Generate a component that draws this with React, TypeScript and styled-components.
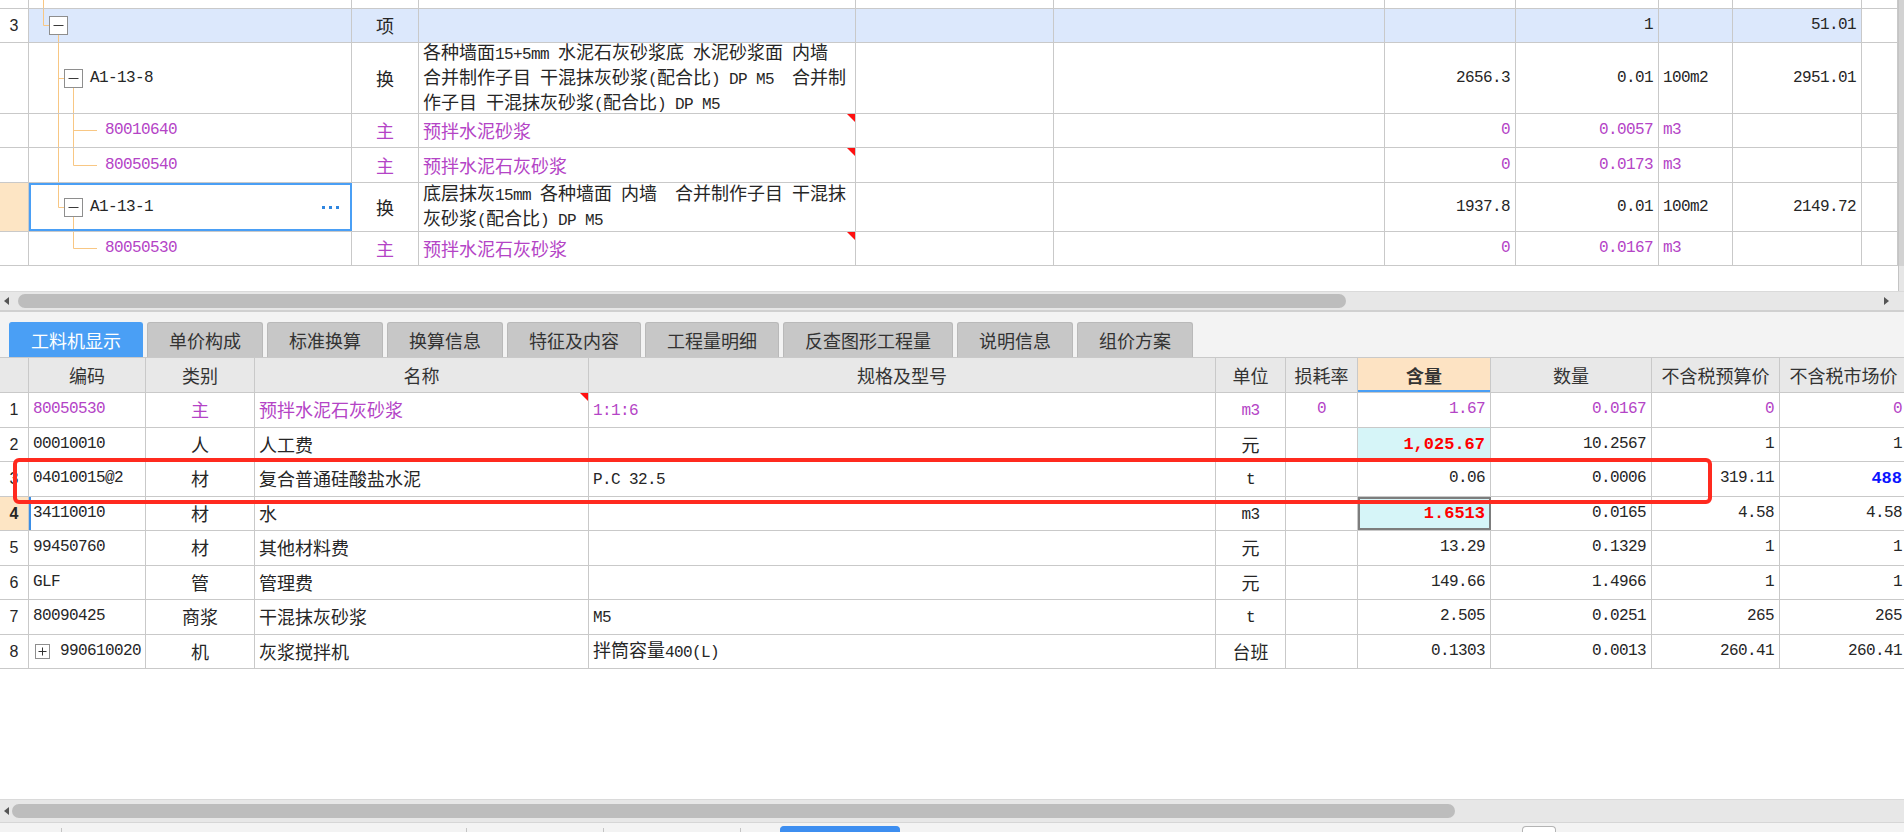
import React from 'react';
import styled, { createGlobalStyle } from 'styled-components';

const TEXT = '#262626';
const PURPLE = '#b444c6';
const GRID = '#c9c9c9';
const BAND = '#dce8fc';
const CURRENT = '#fde5c4';
const CYAN = '#d6f5f8';
const ORANGE = '#f8c784';
const BLUE = '#4a9ff5';

const GlobalStyle = createGlobalStyle`
  html, body {
    margin: 0;
    padding: 0;
    background: #fff;
  }
  body {
    font-family: "Noto Sans CJK SC", "Liberation Sans", sans-serif;
    font-size: 18px;
    color: ${TEXT};
    overflow: hidden;
  }
  * {
    box-sizing: border-box;
  }
`;

type Align = 'left' | 'center' | 'right';
type TreeKind = 'pre' | 'group' | 'item1' | 'leafMid' | 'leafEnd' | 'item2' | 'leafLast';

interface TopRowData {
  h: number;
  tree: TreeKind;
  num?: string;
  code?: string;
  type?: string;
  name?: string;
  n1?: string;
  n2?: string;
  unit?: string;
  n3?: string;
  main?: boolean;
  flag?: boolean;
  band?: boolean;
  current?: boolean;
}

interface BottomRowData {
  no: string;
  code: string;
  type: string;
  name: string;
  spec?: string;
  unit: string;
  loss?: string;
  qty: string;
  amount: string;
  budget: string;
  market: string;
  main?: boolean;
  flag?: boolean;
  hot?: boolean;
  current?: boolean;
  blue?: boolean;
  expand?: boolean;
}

const topRows: TopRowData[] = [
  { h: 9, tree: 'pre' },
  { h: 34, tree: 'group', num: '3', type: '项', n2: '1', n3: '51.01', band: true },
  {
    h: 71,
    tree: 'item1',
    code: 'A1-13-8',
    type: '换',
    name: '各种墙面15+5mm 水泥石灰砂浆底 水泥砂浆面 内墙 合并制作子目 干混抹灰砂浆(配合比) DP M5  合并制作子目 干混抹灰砂浆(配合比) DP M5',
    n1: '2656.3',
    n2: '0.01',
    unit: '100m2',
    n3: '2951.01',
  },
  { h: 34, tree: 'leafMid', code: '80010640', type: '主', name: '预拌水泥砂浆', n1: '0', n2: '0.0057', unit: 'm3', main: true, flag: true },
  { h: 35, tree: 'leafEnd', code: '80050540', type: '主', name: '预拌水泥石灰砂浆', n1: '0', n2: '0.0173', unit: 'm3', main: true, flag: true },
  {
    h: 49,
    tree: 'item2',
    code: 'A1-13-1',
    type: '换',
    name: '底层抹灰15mm 各种墙面 内墙  合并制作子目 干混抹灰砂浆(配合比) DP M5',
    n1: '1937.8',
    n2: '0.01',
    unit: '100m2',
    n3: '2149.72',
    current: true,
  },
  { h: 34, tree: 'leafLast', code: '80050530', type: '主', name: '预拌水泥石灰砂浆', n1: '0', n2: '0.0167', unit: 'm3', main: true, flag: true },
];

const tabs = ['工料机显示', '单价构成', '标准换算', '换算信息', '特征及内容', '工程量明细', '反查图形工程量', '说明信息', '组价方案'];

const BOTTOM_COLS = [29, 117, 109, 334, 627, 70, 72, 133, 161, 128, 128];
const HEADERS = ['', '编码', '类别', '名称', '规格及型号', '单位', '损耗率', '含量', '数量', '不含税预算价', '不含税市场价'];

const bottomRows: BottomRowData[] = [
  { no: '1', code: '80050530', type: '主', name: '预拌水泥石灰砂浆', spec: '1:1:6', unit: 'm3', loss: '0', qty: '1.67', amount: '0.0167', budget: '0', market: '0', main: true, flag: true },
  { no: '2', code: '00010010', type: '人', name: '人工费', unit: '元', qty: '1,025.67', amount: '10.2567', budget: '1', market: '1', hot: true },
  { no: '3', code: '04010015@2', type: '材', name: '复合普通硅酸盐水泥', spec: 'P.C 32.5', unit: 't', qty: '0.06', amount: '0.0006', budget: '319.11', market: '488', blue: true },
  { no: '4', code: '34110010', type: '材', name: '水', unit: 'm3', qty: '1.6513', amount: '0.0165', budget: '4.58', market: '4.58', hot: true, current: true },
  { no: '5', code: '99450760', type: '材', name: '其他材料费', unit: '元', qty: '13.29', amount: '0.1329', budget: '1', market: '1' },
  { no: '6', code: 'GLF', type: '管', name: '管理费', unit: '元', qty: '149.66', amount: '1.4966', budget: '1', market: '1' },
  { no: '7', code: '80090425', type: '商浆', name: '干混抹灰砂浆', spec: 'M5', unit: 't', qty: '2.505', amount: '0.0251', budget: '265', market: '265' },
  { no: '8', code: '990610020', type: '机', name: '灰浆搅拌机', spec: '拌筒容量400(L)', unit: '台班', qty: '0.1303', amount: '0.0013', budget: '260.41', market: '260.41', expand: true },
];

const Page = styled.div`
  position: relative;
  width: 1904px;
  height: 832px;
  display: flex;
  flex-direction: column;
  overflow: hidden;
  background: #fff;
`;

const TopPane = styled.div`
  flex: none;
  height: 291px;
  display: flex;
`;

const TopTable = styled.div`
  width: 1898px;
  display: flex;
  flex-direction: column;
`;

const VScroll = styled.div`
  width: 6px;
  background: #e6e6e6;
  border-left: 1px solid #c4c4c4;
  display: flex;
  flex-direction: column;
`;

const VThumb = styled.div`
  height: 266px;
  background: #d2d2d2;
`;

const Row = styled.div<{ $h: number }>`
  flex: none;
  display: flex;
  height: ${p => p.$h}px;
  border-bottom: 1px solid ${GRID};
`;

const Cell = styled.div<{ $w: number; $align?: Align; $color?: string; $bg?: string; $bold?: boolean }>`
  position: relative;
  flex: none;
  width: ${p => p.$w}px;
  height: 100%;
  display: flex;
  align-items: center;
  justify-content: ${p => (p.$align === 'right' ? 'flex-end' : p.$align === 'center' ? 'center' : 'flex-start')};
  padding: 0 ${p => (p.$align === 'right' ? 5 : 4)}px;
  border-right: 1px solid ${GRID};
  background: ${p => p.$bg || 'transparent'};
  color: ${p => p.$color || TEXT};
  font-weight: ${p => (p.$bold ? 700 : 400)};
  line-height: 21px;
  white-space: nowrap;
  overflow: hidden;
`;

const DescCell = styled(Cell)`
  white-space: pre-wrap;
  overflow: visible;
`;

const TreeCell = styled(Cell)<{ $selected?: boolean }>`
  padding: 0;
  outline: ${p => (p.$selected ? `2px solid ${BLUE}` : 'none')};
  outline-offset: -2px;
`;

const CodeCell = styled(Cell)<{ $marked?: boolean }>`
  box-shadow: ${p => (p.$marked ? `inset 2px 0 0 #3a8ee6` : 'none')};
`;

const QtyCell = styled(Cell)<{ $selected?: boolean }>`
  outline: ${p => (p.$selected ? '2px solid #7d7d7d' : 'none')};
  outline-offset: -2px;
`;

const Mono = styled.span<{ $color?: string }>`
  font-family: "Liberation Mono", "DejaVu Sans Mono", monospace;
  font-size: 16px;
  letter-spacing: -0.6px;
  color: ${p => p.$color || 'inherit'};
`;

const HotNum = styled.span<{ $color: string }>`
  font-family: "Liberation Mono", "DejaVu Sans Mono", monospace;
  font-size: 17px;
  font-weight: 700;
  color: ${p => p.$color};
`;

const RowNo = styled.span<{ $bold?: boolean }>`
  font-family: "Liberation Sans", Arial, sans-serif;
  font-size: 16px;
  font-weight: ${p => (p.$bold ? 700 : 400)};
`;

const Flag = styled.span`
  position: absolute;
  top: 0;
  right: 0;
  width: 0;
  height: 0;
  border-top: 8px solid #ff1010;
  border-left: 8px solid transparent;
`;

const Dots = styled.span`
  margin-left: auto;
  margin-right: 12px;
  display: flex;
  gap: 4px;
`;

const Dot = styled.span`
  width: 3px;
  height: 3px;
  background: #2f86e0;
`;

const GuideSvg = styled.svg`
  flex: none;
  display: block;
`;

const HScroll = styled.div<{ $h: number; $pr: number }>`
  flex: none;
  height: ${p => p.$h}px;
  display: flex;
  align-items: center;
  padding: 0 ${p => p.$pr}px 0 4px;
  background: #e7e7e7;
  border-top: 1px solid #dadada;
`;

const Arrow = styled.span<{ $dir: 'left' | 'right' }>`
  flex: none;
  width: 0;
  height: 0;
  border-top: 4px solid transparent;
  border-bottom: 4px solid transparent;
  ${p => (p.$dir === 'left' ? 'border-right: 5px solid #555;' : 'border-left: 5px solid #555;')}
`;

const Thumb = styled.div<{ $w: number; $ml: number }>`
  flex: none;
  width: ${p => p.$w}px;
  height: 14px;
  margin-left: ${p => p.$ml}px;
  border-radius: 7px;
  background: #bdbdbd;
`;

const Spacer = styled.div`
  flex: 1;
`;

const TabBar = styled.div`
  flex: none;
  height: 48px;
  display: flex;
  align-items: flex-end;
  gap: 4px;
  padding-left: 9px;
  background: #f3f3f3;
  border-top: 2px solid #d0d0d0;
  border-bottom: 1px solid ${GRID};
`;

const Tab = styled.div<{ $active?: boolean }>`
  height: 35px;
  padding: 0 21px;
  display: flex;
  align-items: center;
  border: 1px solid ${p => (p.$active ? BLUE : '#b9b9b9')};
  border-bottom: none;
  border-radius: 3px 3px 0 0;
  background: ${p => (p.$active ? BLUE : '#c7c7c7')};
  color: ${p => (p.$active ? '#fff' : '#333')};
  font-size: 18px;
  line-height: 1;
`;

const BottomPane = styled.div`
  flex: none;
  width: 1904px;
  overflow: hidden;
  display: flex;
  flex-direction: column;
`;

const HeadRow = styled.div`
  flex: none;
  display: flex;
  width: 1908px;
  height: 35px;
  border-bottom: 1px solid ${GRID};
  background: #e8e8e8;
`;

const HeadCell = styled(Cell)<{ $hot?: boolean }>`
  background: ${p => (p.$hot ? '#fde3c3' : 'transparent')};
  font-weight: ${p => (p.$hot ? 700 : 400)};
  color: #333;
  box-shadow: ${p => (p.$hot ? `inset 0 -2px 0 ${BLUE}` : 'none')};
`;

const BRow = styled.div`
  flex: none;
  display: flex;
  width: 1908px;
  height: 34.5px;
  border-bottom: 1px solid ${GRID};
`;

const PlusBox = styled.svg`
  flex: none;
  margin: 0 10px 0 2px;
  display: block;
`;

const Filler = styled.div`
  flex: 1;
`;

const StatusStrip = styled.div`
  flex: none;
  height: 10px;
  display: flex;
  align-items: flex-end;
  background: #f3f3f3;
  border-top: 1px solid #d6d6d6;
`;

const Tick = styled.span<{ $ml: number }>`
  flex: none;
  width: 1px;
  height: 4px;
  margin-left: ${p => p.$ml}px;
  background: #c4c4c4;
`;

const StripButton = styled.span<{ $ml: number; $w: number; $blue?: boolean }>`
  flex: none;
  width: ${p => p.$w}px;
  height: 6px;
  margin-left: ${p => p.$ml}px;
  border-radius: 4px 4px 0 0;
  background: ${p => (p.$blue ? '#3d8ef0' : '#fff')};
  border: 1px solid ${p => (p.$blue ? '#3d8ef0' : '#b4b4b4')};
  border-bottom: none;
`;

const Highlight = styled.div`
  position: absolute;
  left: 13px;
  top: 458px;
  width: 1699px;
  height: 46px;
  border: 4px solid #ff2a1f;
  border-radius: 6px;
  pointer-events: none;
`;

const Mixed = ({ text }: { text: string }) => (
  <span>
    {text
      .split(/([\x00-\x7f]+)/)
      .filter(Boolean)
      .map((part, i) =>
        /^[\x00-\x7f]+$/.test(part) ? <Mono key={i}>{part}</Mono> : <React.Fragment key={i}>{part}</React.Fragment>,
      )}
  </span>
);

const TreeGuide = ({ kind, h }: { kind: TreeKind; h: number }) => {
  const m = Math.floor(h / 2) + 0.5;
  const w = kind.startsWith('leaf') ? 76 : 61;
  const segs: string[] = [];
  let box: number | null = null;
  const v = (x: number, y1: number, y2: number) => segs.push(`M${x} ${y1}V${y2}`);
  const hz = (x1: number, x2: number) => segs.push(`M${x1} ${m}H${x2}`);

  switch (kind) {
    case 'pre':
      v(14.5, 0, h);
      break;
    case 'group':
      v(14.5, 0, m);
      hz(14.5, 20.5);
      v(29.5, m + 9, h);
      box = 29.5;
      break;
    case 'item1':
      v(29.5, 0, h);
      hz(29.5, 35.5);
      v(44.5, m + 9, h);
      box = 44.5;
      break;
    case 'leafMid':
      v(29.5, 0, h);
      v(44.5, 0, h);
      hz(44.5, 68);
      break;
    case 'leafEnd':
      v(29.5, 0, h);
      v(44.5, 0, m);
      hz(44.5, 68);
      break;
    case 'item2':
      v(29.5, 0, m);
      hz(29.5, 35.5);
      v(44.5, m + 9, h);
      box = 44.5;
      break;
    case 'leafLast':
      v(44.5, 0, m);
      hz(44.5, 68);
      break;
  }

  return (
    <GuideSvg width={w} height={h} viewBox={`0 0 ${w} ${h}`}>
      <path d={segs.join('')} stroke={ORANGE} strokeWidth={1} fill="none" />
      {box !== null && (
        <g>
          <rect x={box - 9} y={m - 9} width={18} height={18} fill="#fff" stroke="#8e8e8e" />
          <path d={`M${box - 5} ${m}H${box + 5}`} stroke="#3a3a3a" />
        </g>
      )}
    </GuideSvg>
  );
};

const TopLine = ({ r }: { r: TopRowData }) => {
  const color = r.main ? PURPLE : TEXT;
  const bg = r.band ? BAND : undefined;
  return (
    <Row $h={r.h}>
      <Cell $w={29} $align="center" $bg={r.current ? CURRENT : undefined}>
        <RowNo>{r.num}</RowNo>
      </Cell>
      <TreeCell $w={323} $bg={bg} $selected={r.current}>
        <TreeGuide kind={r.tree} h={r.h - 1} />
        {r.code && <Mono $color={color}>{r.code}</Mono>}
        {r.current && (
          <Dots>
            <Dot />
            <Dot />
            <Dot />
          </Dots>
        )}
      </TreeCell>
      <Cell $w={67} $align="center" $bg={bg} $color={color}>
        {r.type}
      </Cell>
      <DescCell $w={437} $bg={bg} $color={color}>
        {r.name && <Mixed text={r.name} />}
        {r.flag && <Flag />}
      </DescCell>
      <Cell $w={198} $bg={bg} />
      <Cell $w={331} $bg={bg} />
      <Cell $w={131} $align="right" $bg={bg}>
        <Mono $color={color}>{r.n1}</Mono>
      </Cell>
      <Cell $w={143} $align="right" $bg={bg}>
        <Mono $color={color}>{r.n2}</Mono>
      </Cell>
      <Cell $w={74} $bg={bg}>
        <Mono $color={color}>{r.unit}</Mono>
      </Cell>
      <Cell $w={129} $align="right" $bg={bg}>
        <Mono>{r.n3}</Mono>
      </Cell>
      <Cell $w={36} />
    </Row>
  );
};

const BottomLine = ({ r }: { r: BottomRowData }) => {
  const color = r.main ? PURPLE : TEXT;
  return (
    <BRow>
      <Cell $w={29} $align="center" $bg={r.current ? CURRENT : undefined}>
        <RowNo $bold={r.current}>{r.no}</RowNo>
      </Cell>
      <CodeCell $w={117} $marked={r.current}>
        {r.expand && (
          <PlusBox width={15} height={15} viewBox="0 0 15 15">
            <rect x={0.5} y={0.5} width={14} height={14} fill="#fff" stroke="#8e8e8e" />
            <path d="M3.5 7.5H11.5M7.5 3.5V11.5" stroke="#333" />
          </PlusBox>
        )}
        <Mono $color={color}>{r.code}</Mono>
      </CodeCell>
      <Cell $w={109} $align="center" $color={color}>
        {r.type}
      </Cell>
      <Cell $w={334} $color={color}>
        {r.name}
        {r.flag && <Flag />}
      </Cell>
      <Cell $w={627} $color={color}>
        {r.spec && <Mixed text={r.spec} />}
      </Cell>
      <Cell $w={70} $align="center" $color={color}>
        <Mixed text={r.unit} />
      </Cell>
      <Cell $w={72} $align="center">
        <Mono $color={color}>{r.loss}</Mono>
      </Cell>
      <QtyCell $w={133} $align="right" $bg={r.hot ? CYAN : undefined} $selected={r.current}>
        {r.hot ? <HotNum $color="#ff0000">{r.qty}</HotNum> : <Mono $color={color}>{r.qty}</Mono>}
      </QtyCell>
      <Cell $w={161} $align="right">
        <Mono $color={color}>{r.amount}</Mono>
      </Cell>
      <Cell $w={128} $align="right">
        <Mono $color={color}>{r.budget}</Mono>
      </Cell>
      <Cell $w={128} $align="right">
        {r.blue ? <HotNum $color="#0a14ff">{r.market}</HotNum> : <Mono $color={color}>{r.market}</Mono>}
      </Cell>
    </BRow>
  );
};

const App: React.FC = () => (
  <Page>
    <GlobalStyle />
    <TopPane>
      <TopTable>
        {topRows.map((r, i) => (
          <TopLine key={i} r={r} />
        ))}
      </TopTable>
      <VScroll>
        <VThumb />
      </VScroll>
    </TopPane>

    <HScroll $h={19} $pr={15}>
      <Arrow $dir="left" />
      <Thumb $w={1328} $ml={9} />
      <Spacer />
      <Arrow $dir="right" />
    </HScroll>

    <TabBar>
      {tabs.map((t, i) => (
        <Tab key={t} $active={i === 0}>
          {t}
        </Tab>
      ))}
    </TabBar>

    <BottomPane>
      <HeadRow>
        {HEADERS.map((h, i) => (
          <HeadCell key={i} $w={BOTTOM_COLS[i]} $align="center" $hot={h === '含量'}>
            {h}
          </HeadCell>
        ))}
      </HeadRow>
      {bottomRows.map(r => (
        <BottomLine key={r.no} r={r} />
      ))}
    </BottomPane>

    <Filler />

    <HScroll $h={23} $pr={0}>
      <Arrow $dir="left" />
      <Thumb $w={1443} $ml={3} />
    </HScroll>

    <StatusStrip>
      <Tick $ml={61} />
      <Tick $ml={404} />
      <Tick $ml={136} />
      <Tick $ml={136} />
      <StripButton $ml={39} $w={120} $blue />
      <StripButton $ml={622} $w={34} />
    </StatusStrip>

    <Highlight />
  </Page>
);

export default App;
